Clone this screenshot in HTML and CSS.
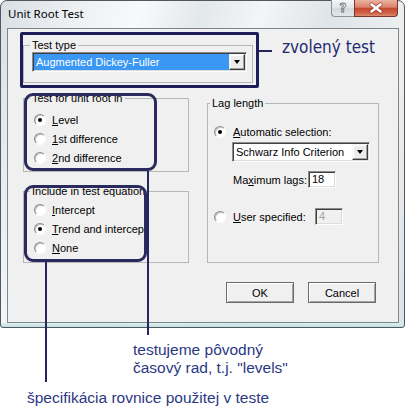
FILE: index.html
```html
<!DOCTYPE html>
<html lang="sk">
<head>
  <meta charset="UTF-8" />
  <meta name="viewport" content="width=device-width, initial-scale=1.0"/>
  <title>Unit Root Test</title>
  <link rel="stylesheet" href="styles.css">
</head>
<body>
  <div class="page">
    <div class="dialog">
      <div class="titlebar">
        <span class="title">Unit Root Test</span>
        <div class="caption">
          <span class="cap-btn help">?</span>
          <span class="cap-btn close">
            <svg width="42" height="16" viewBox="0 0 42 16">
              <path d="M16.5 4.5 L25.5 11.5 M25.5 4.5 L16.5 11.5" stroke="#7a3022" stroke-width="4.2" stroke-linecap="round" opacity="0.55"/>
              <path d="M16.5 4.5 L25.5 11.5 M25.5 4.5 L16.5 11.5" stroke="#fff" stroke-width="2.4" stroke-linecap="round"/>
            </svg>
          </span>
        </div>
      </div>

      <div class="client">
        <fieldset class="group group-type">
          <legend>Test type</legend>
          <div class="combo selected">
            <span class="combo-text">Augmented Dickey-Fuller</span>
            <span class="combo-arrow"></span>
          </div>
        </fieldset>

        <div class="options">
          <div class="col-left">
            <fieldset class="group group-root">
              <legend>Test for unit root in</legend>
              <div class="radio"><span class="dot on"></span><span><u>L</u>evel</span></div>
              <div class="radio"><span class="dot"></span><span><u>1</u>st difference</span></div>
              <div class="radio"><span class="dot"></span><span><u>2</u>nd difference</span></div>
            </fieldset>
            <fieldset class="group group-eq">
              <legend>Include in test equation</legend>
              <div class="radio"><span class="dot"></span><span><u>I</u>ntercept</span></div>
              <div class="radio"><span class="dot on"></span><span><u>T</u>rend and intercept</span></div>
              <div class="radio"><span class="dot"></span><span><u>N</u>one</span></div>
            </fieldset>
          </div>

          <fieldset class="group group-lag">
            <legend>Lag length</legend>
            <div class="radio lag-radio"><span class="dot on"></span><span><u>A</u>utomatic selection:</span></div>
            <div class="combo combo-lag">
              <span class="combo-text">Schwarz Info Criterion</span>
              <span class="combo-arrow"></span>
            </div>
            <div class="lag-field">
              <span class="lag-label">Ma<u>x</u>imum lags:</span>
              <span class="edit">18</span>
            </div>
            <div class="radio lag-radio lag-user">
              <span class="dot"></span>
              <span class="lag-label"><u>U</u>ser specified:</span>
              <span class="edit disabled">4</span>
            </div>
          </fieldset>
        </div>

        <div class="buttons">
          <button class="btn">OK</button>
          <button class="btn">Cancel</button>
        </div>
      </div>
    </div>

    <!-- annotations drawn over the dialog -->
    <div class="mark mark-type"></div>
    <div class="lead lead-type"></div>
    <div class="note note-type">zvolený test</div>

    <div class="mark mark-root"></div>
    <div class="lead lead-root"></div>
    <div class="note note-root">testujeme pôvodný<br>časový rad, t.j. "levels"</div>

    <div class="mark mark-eq"></div>
    <div class="lead lead-eq"></div>
    <div class="note note-eq">špecifikácia rovnice použitej v teste</div>
  </div>
</body>
</html>
```

FILE: styles.css
```css
body {
  margin: 0;
  background: #fff;
  font-family: "Liberation Sans", Arial, sans-serif;
}

.page {
  position: relative;
  width: 405px;
  height: 410px;
}

.dialog {
  width: 405px;
  height: 328px;
  box-sizing: border-box;
  border: 1px solid #51575c;
  border-radius: 7px 7px 3px 3px;
  padding: 0 5px 4px 6px;
  display: flex;
  flex-direction: column;
  background:
    linear-gradient(to top, #bcdfe2 0, #d6ecee 3px, rgba(255,255,255,0) 5px),
    linear-gradient(108deg, #d9dfe4 0%, #eceff2 14%, #f8f9fa 28%, #e3e8eb 40%, #f3f5f6 52%, #dfe4e8 66%, #edf0f2 82%, #dde2e6 100%);
}

.titlebar {
  height: 27px;
  display: flex;
  align-items: flex-start;
}

.title {
  margin: 5px 0 0 1px;
  font-family: "Noto Sans", "Liberation Sans", sans-serif;
  font-size: 11.5px;
  line-height: 16px;
  color: #000;
}

.caption {
  display: flex;
  margin: -1px 1px 0 auto;
}

.cap-btn {
  height: 17px;
  box-sizing: border-box;
  display: flex;
  align-items: center;
  justify-content: center;
}

.help {
  width: 23px;
  border: 1px solid #8b9298;
  border-top: none;
  border-right: none;
  border-bottom-left-radius: 4px;
  background: linear-gradient(#f4f6f8, #dfe4e8 50%, #d3d9de 51%, #e2e6ea);
  font-family: "DejaVu Sans", sans-serif;
  font-size: 12px;
  font-weight: bold;
  color: #f3f3f3;
  -webkit-text-stroke: 0.8px #6d737a;
}

.close {
  width: 44px;
  border: 1px solid #7b3528;
  border-top: none;
  border-bottom-right-radius: 4px;
  background: linear-gradient(#eab2a3 0%, #d9826b 45%, #c4492f 52%, #cf5f45 80%, #dc8a72 100%);
}

.client {
  flex: 1;
  background: #f0f0f0;
  border: 1px solid #7f878e;
  padding: 10px 0 0 15px;
  font-size: 11px;
  color: #000;
}

.group {
  margin: 0;
  min-width: 0;
  box-sizing: border-box;
  border: 1px solid #b7b7b7;
}

.group legend {
  padding: 0 2px;
  margin-left: -4px;
  line-height: 13px;
}

.group-type {
  width: 230px;
  padding: 0 5px 10px 8px;
}

.group-type legend {
  margin-left: -2px;
}

.options {
  display: flex;
  gap: 18px;
  margin-top: 9px;
}

.col-left {
  width: 166px;
  display: flex;
  flex-direction: column;
}

.group-root {
  padding: 5px 4px 4px 10px;
}

.group-eq {
  margin-top: 13px;
  padding: 2px 4px 5px 10px;
}

.group-lag {
  width: 172px;
  margin-top: 5px;
  padding: 12px 6px 0 6px;
}

.radio {
  display: flex;
  align-items: center;
  gap: 6px;
  height: 19px;
  white-space: nowrap;
}

.dot {
  position: relative;
  flex: none;
  width: 12px;
  height: 12px;
  box-sizing: border-box;
  border-radius: 50%;
  border: 1px solid;
  border-color: #8c8c8c #fdfdfd #fdfdfd #8c8c8c;
  background: #fff;
  box-shadow: inset 1px 1px 0 #c4c4c4;
}

.dot.on::after {
  content: "";
  position: absolute;
  left: 3px;
  top: 3px;
  width: 4px;
  height: 4px;
  border-radius: 50%;
  background: #000;
}

.combo {
  display: flex;
  height: 20px;
  box-sizing: border-box;
  border: 1px solid;
  border-color: #8c8c8c #fdfdfd #fdfdfd #8c8c8c;
  box-shadow: inset 1px 1px 0 #404040, inset -1px -1px 0 #dcdcdc;
  background: #fff;
  padding: 1px;
}

.combo-text {
  flex: 1;
  padding-left: 2px;
  line-height: 16px;
  white-space: nowrap;
  overflow: hidden;
}

.combo.selected .combo-text {
  background: #3a97f3;
  color: #fff;
}

.combo-arrow {
  width: 16px;
  height: 16px;
  box-sizing: border-box;
  background: #ececec;
  border: 1px solid;
  border-color: #f6f6f6 #3c3c3c #3c3c3c #f6f6f6;
  box-shadow: inset -1px -1px 0 #a0a0a0, inset 1px 1px 0 #fff;
  display: flex;
  align-items: center;
  justify-content: center;
}

.combo-arrow::before {
  content: "";
  border-left: 3.5px solid transparent;
  border-right: 3.5px solid transparent;
  border-top: 4px solid #000;
}

.combo-lag {
  width: 138px;
  margin: 1px 0 0 18px;
}

.lag-radio {
  gap: 7px;
}

.lag-field {
  display: flex;
  align-items: center;
  margin: 9px 0 0 19px;
}

.lag-user {
  height: 17px;
  margin-top: 20px;
}

.lag-label {
  width: 75px;
  white-space: nowrap;
}

.edit {
  width: 28px;
  height: 17px;
  box-sizing: border-box;
  border: 1px solid;
  border-color: #8c8c8c #fdfdfd #fdfdfd #8c8c8c;
  box-shadow: inset 1px 1px 0 #404040, inset -1px -1px 0 #dcdcdc;
  background: #fff;
  padding: 0 3px;
  line-height: 15px;
}

.edit.disabled {
  background: #f0f0f0;
  color: #a3a3a3;
}

.buttons {
  display: flex;
  justify-content: flex-end;
  gap: 14px;
  margin-top: 19px;
  padding-right: 22px;
}

.btn {
  width: 68px;
  height: 21px;
  box-sizing: border-box;
  padding: 0;
  border: 1px solid #6a6a6a;
  border-radius: 0;
  background: #f0f0f0;
  box-shadow: inset 1px 1px 0 #fff, inset -1px -1px 0 #a5a5a5;
  font: inherit;
  color: #000;
}

/* annotations */

.mark {
  position: absolute;
  box-sizing: border-box;
  border: 3px solid #1d1d5c;
}

.mark-type {
  left: 20px;
  top: 32px;
  width: 239px;
  height: 56px;
  border-radius: 2px;
}

.mark-root {
  left: 24px;
  top: 93px;
  width: 133px;
  height: 78px;
  border-radius: 9px;
  border-color: #2a2a5e;
}

.mark-eq {
  left: 24px;
  top: 185px;
  width: 123px;
  height: 77px;
  border-radius: 9px;
  border-color: #2a2a5e;
}

.lead {
  position: absolute;
  background: #25255f;
}

.lead-type {
  left: 259px;
  top: 50px;
  width: 13px;
  height: 2px;
}

.lead-root {
  left: 147px;
  top: 171px;
  width: 2px;
  height: 164px;
}

.lead-eq {
  left: 45px;
  top: 262px;
  width: 2px;
  height: 120px;
}

.note {
  position: absolute;
  color: #2c3883;
  font-size: 15.5px;
  line-height: 18px;
  white-space: nowrap;
}

.note-type {
  left: 282px;
  top: 37px;
  font-family: "DejaVu Sans Condensed", "DejaVu Sans", sans-serif;
  font-stretch: semi-condensed;
  font-size: 17px;
  line-height: 20px;
  color: #1f2a70;
}

.note-root {
  left: 133px;
  top: 341px;
}

.note-eq {
  left: 27px;
  top: 389px;
}
```
